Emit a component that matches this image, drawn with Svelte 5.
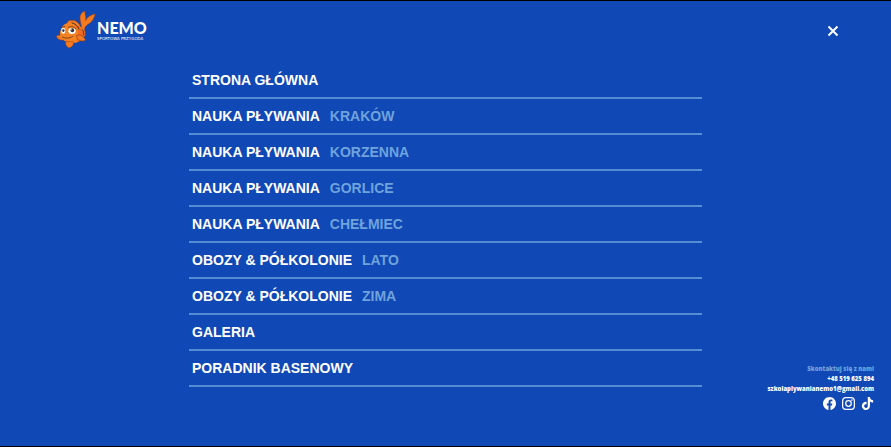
<script>
  const items = [
    { label: 'STRONA GŁÓWNA' },
    { label: 'NAUKA PŁYWANIA', place: 'KRAKÓW' },
    { label: 'NAUKA PŁYWANIA', place: 'KORZENNA' },
    { label: 'NAUKA PŁYWANIA', place: 'GORLICE' },
    { label: 'NAUKA PŁYWANIA', place: 'CHEŁMIEC' },
    { label: 'OBOZY & PÓŁKOLONIE', place: 'LATO' },
    { label: 'OBOZY & PÓŁKOLONIE', place: 'ZIMA' },
    { label: 'GALERIA' },
    { label: 'PORADNIK BASENOWY' }
  ];
</script>

<div class="overlay">
  <header>
    <a class="logo" href="#home" aria-label="Nemo – sportowa przygoda">
      <svg class="fish" viewBox="18 18 120 114" aria-hidden="true">
        <path d="M94 72C96 60 89 48 90 36C91 27 98 20 105 19C103 25 109 35 107 47C112 37 120 30 136 27C132 37 130 47 120 54C111 60 105 63 103 73L107 84L94 87Z" fill="#f47a20" stroke="#a63f12" stroke-width="1.5" />
        <path d="M51 60C50 50 56 44 65 46C78 44 84 53 91 61L83 67Z" fill="#f47a20" stroke="#70331f" stroke-width="1.5" />
        <path d="M37 96C29 88 23 90 19 94C22 102 29 107 41 105Z" fill="#f47a20" stroke="#9d3d16" stroke-width="1.5" />
        <path d="M33 74C37 58 49 52 62 53C82 53 103 70 106 88C102 100 91 111 73 114C53 116 37 106 33 95C28 90 29 81 33 74Z" fill="#f58220" />
        <path d="M69 54C85 60 98 72 106 88C102 100 91 109 79 113C88 98 87 70 69 54Z" fill="#ef6b1f" />
        <path d="M65 53C78 57 84 65 87 73M96 73C100 77 102 83 101 91" fill="none" stroke="#43352f" stroke-width="3" />
        <path d="M48 109C45 118 49 125 57 129C66 126 72 120 71 111Z" fill="#f47a20" stroke="#9d3d16" stroke-width="1.5" />
        <path d="M80 91C91 87 101 94 107 105C99 111 89 108 81 101Z" fill="#f47a20" stroke="#913c19" stroke-width="2" />
        <ellipse cx="40" cy="77" rx="6" ry="9" fill="#fff" />
        <ellipse cx="66" cy="78" rx="11" ry="9" fill="#fff" />
        <ellipse cx="40" cy="76" rx="3.5" ry="5" fill="#332c32" />
        <ellipse cx="67" cy="76" rx="5.5" ry="6" fill="#332c32" />
        <circle cx="39" cy="74" r="1.5" fill="#fff" />
        <circle cx="65" cy="74" r="1.5" fill="#fff" />
        <path d="M34 67L44 65M55 67C63 62 72 65 78 72M37 96C47 101 58 101 68 94" fill="none" stroke="#63331f" stroke-width="2.5" stroke-linecap="round" />
      </svg>
      <span class="brand">
        <strong>NEMO</strong>
        <small>SPORTOWA PRZYGODA</small>
      </span>
    </a>
    <button type="button" aria-label="Zamknij menu">
      <svg viewBox="0 0 12 12" aria-hidden="true">
        <path d="M1.5 1.5L10.5 10.5M10.5 1.5L1.5 10.5" fill="none" stroke="#fff" stroke-width="2" />
      </svg>
    </button>
  </header>

  <div class="content">
    <nav aria-label="Menu główne">
      <ul>
        {#each items as item}
          <li>
            <a href="#menu"><span>{item.label}</span>{#if item.place}<span class="place">{item.place}</span>{/if}</a>
          </li>
        {/each}
      </ul>
    </nav>

    <address>
      <span class="prompt">Skontaktuj się z nami</span>
      <a href="tel:+48519625894">+48 519 625 894</a>
      <a href="mailto:szkolaplywanianemo1@gmail.com">szkolaplywanianemo1@gmail.com</a>
      <div class="social">
        <a href="#facebook" aria-label="Facebook">
          <svg viewBox="0 0 24 24" aria-hidden="true">
            <path fill="#fff" d="M24 12.07C24 5.4 18.63 0 12 0S0 5.4 0 12.07C0 18.1 4.39 23.09 10.13 24v-8.44H7.08v-3.49h3.05V9.41c0-3.03 1.79-4.7 4.53-4.7 1.31 0 2.68.24 2.68.24v2.97h-1.51c-1.49 0-1.96.93-1.96 1.89v2.26h3.33l-.53 3.49h-2.8V24C19.61 23.09 24 18.1 24 12.07z" />
          </svg>
        </a>
        <a href="#instagram" aria-label="Instagram">
          <svg viewBox="0 0 24 24" aria-hidden="true">
            <rect x="1.2" y="1.2" width="21.6" height="21.6" rx="6" fill="none" stroke="#fff" stroke-width="2.3" />
            <circle cx="12" cy="12" r="5.1" fill="none" stroke="#fff" stroke-width="2.3" />
            <circle cx="18.3" cy="5.7" r="1.5" fill="#fff" />
          </svg>
        </a>
        <a href="#tiktok" aria-label="TikTok">
          <svg viewBox="0 0 24 24" aria-hidden="true">
            <path fill="#fff" d="M12.53.02C13.84 0 15.14.01 16.44 0c.08 1.53.63 3.09 1.75 4.17 1.12 1.11 2.7 1.62 4.24 1.79v4.03c-1.44-.05-2.89-.35-4.2-.97-.57-.26-1.1-.59-1.62-.93-.01 2.92.01 5.84-.02 8.75-.08 1.4-.54 2.79-1.35 3.94-1.31 1.92-3.58 3.17-5.91 3.21-1.43.08-2.86-.31-4.08-1.03-2.02-1.19-3.44-3.37-3.65-5.71-.02-.5-.03-1-.01-1.49.18-1.9 1.12-3.72 2.58-4.96 1.66-1.44 3.98-2.13 6.15-1.72.02 1.48-.04 2.96-.04 4.44-.99-.32-2.15-.23-3.02.37-.63.41-1.11 1.04-1.36 1.75-.21.51-.15 1.07-.14 1.61.24 1.64 1.82 3.02 3.5 2.87 1.12-.01 2.19-.66 2.77-1.61.19-.33.4-.67.41-1.06.1-1.79.06-3.57.07-5.36.01-4.03-.01-8.05.02-12.07z" />
          </svg>
        </a>
      </div>
    </address>
  </div>
</div>

<style>
  :global(body) {
    margin: 0;
    background: #1048b5;
  }

  .overlay {
    box-sizing: border-box;
    min-height: 100vh;
    display: flex;
    flex-direction: column;
    background: #1048b5;
    border-top: 1px solid #000;
    border-bottom: 1px solid #000;
    color: #fff;
    font-family: "Liberation Sans", Arial, sans-serif;
  }

  a {
    color: inherit;
    text-decoration: none;
  }

  svg {
    display: block;
  }

  header {
    display: flex;
    justify-content: space-between;
    align-items: center;
    padding: 10px 52px 13px 56px;
  }

  .logo {
    display: flex;
    align-items: center;
    gap: 1px;
  }

  .fish {
    width: 40px;
    height: 38px;
  }

  .brand {
    display: flex;
    flex-direction: column;
    font-family: Lato, sans-serif;
    padding-top: 2px;
  }

  .brand strong {
    font-size: 16px;
    line-height: 16px;
    font-weight: 900;
  }

  .brand small {
    font-family: "DejaVu Sans", sans-serif;
    font-size: 4px;
    line-height: 6px;
  }

  button {
    display: grid;
    place-items: center;
    width: 12px;
    height: 14px;
    padding: 2px 0 0;
    border: 0;
    background: none;
    cursor: pointer;
  }

  button svg {
    width: 12px;
    height: 12px;
  }

  .content {
    flex: 1;
    display: grid;
    grid-template-columns: 7fr 19fr 7fr;
    align-items: start;
  }

  nav {
    grid-column: 2;
  }

  ul {
    margin: 0;
    padding: 1px 0 0;
    list-style: none;
  }

  li a {
    display: flex;
    gap: 10px;
    padding: 8px 3px;
    border-bottom: 2px solid #558dd3;
    font-size: 14px;
    line-height: 18px;
    font-weight: 700;
  }

  .place {
    color: #6fa3dc;
  }

  address {
    grid-column: 3;
    align-self: end;
    display: flex;
    flex-direction: column;
    align-items: flex-end;
    padding: 0 17px 36px 0;
    font-family: "Open Sans", sans-serif;
    font-style: normal;
    font-size: 6px;
    line-height: 10px;
    font-weight: 800;
  }

  .prompt {
    color: #6fa3dc;
  }

  .social {
    display: flex;
    gap: 6px;
    padding-top: 3px;
  }

  .social svg {
    width: 13px;
    height: 13px;
  }
</style>
